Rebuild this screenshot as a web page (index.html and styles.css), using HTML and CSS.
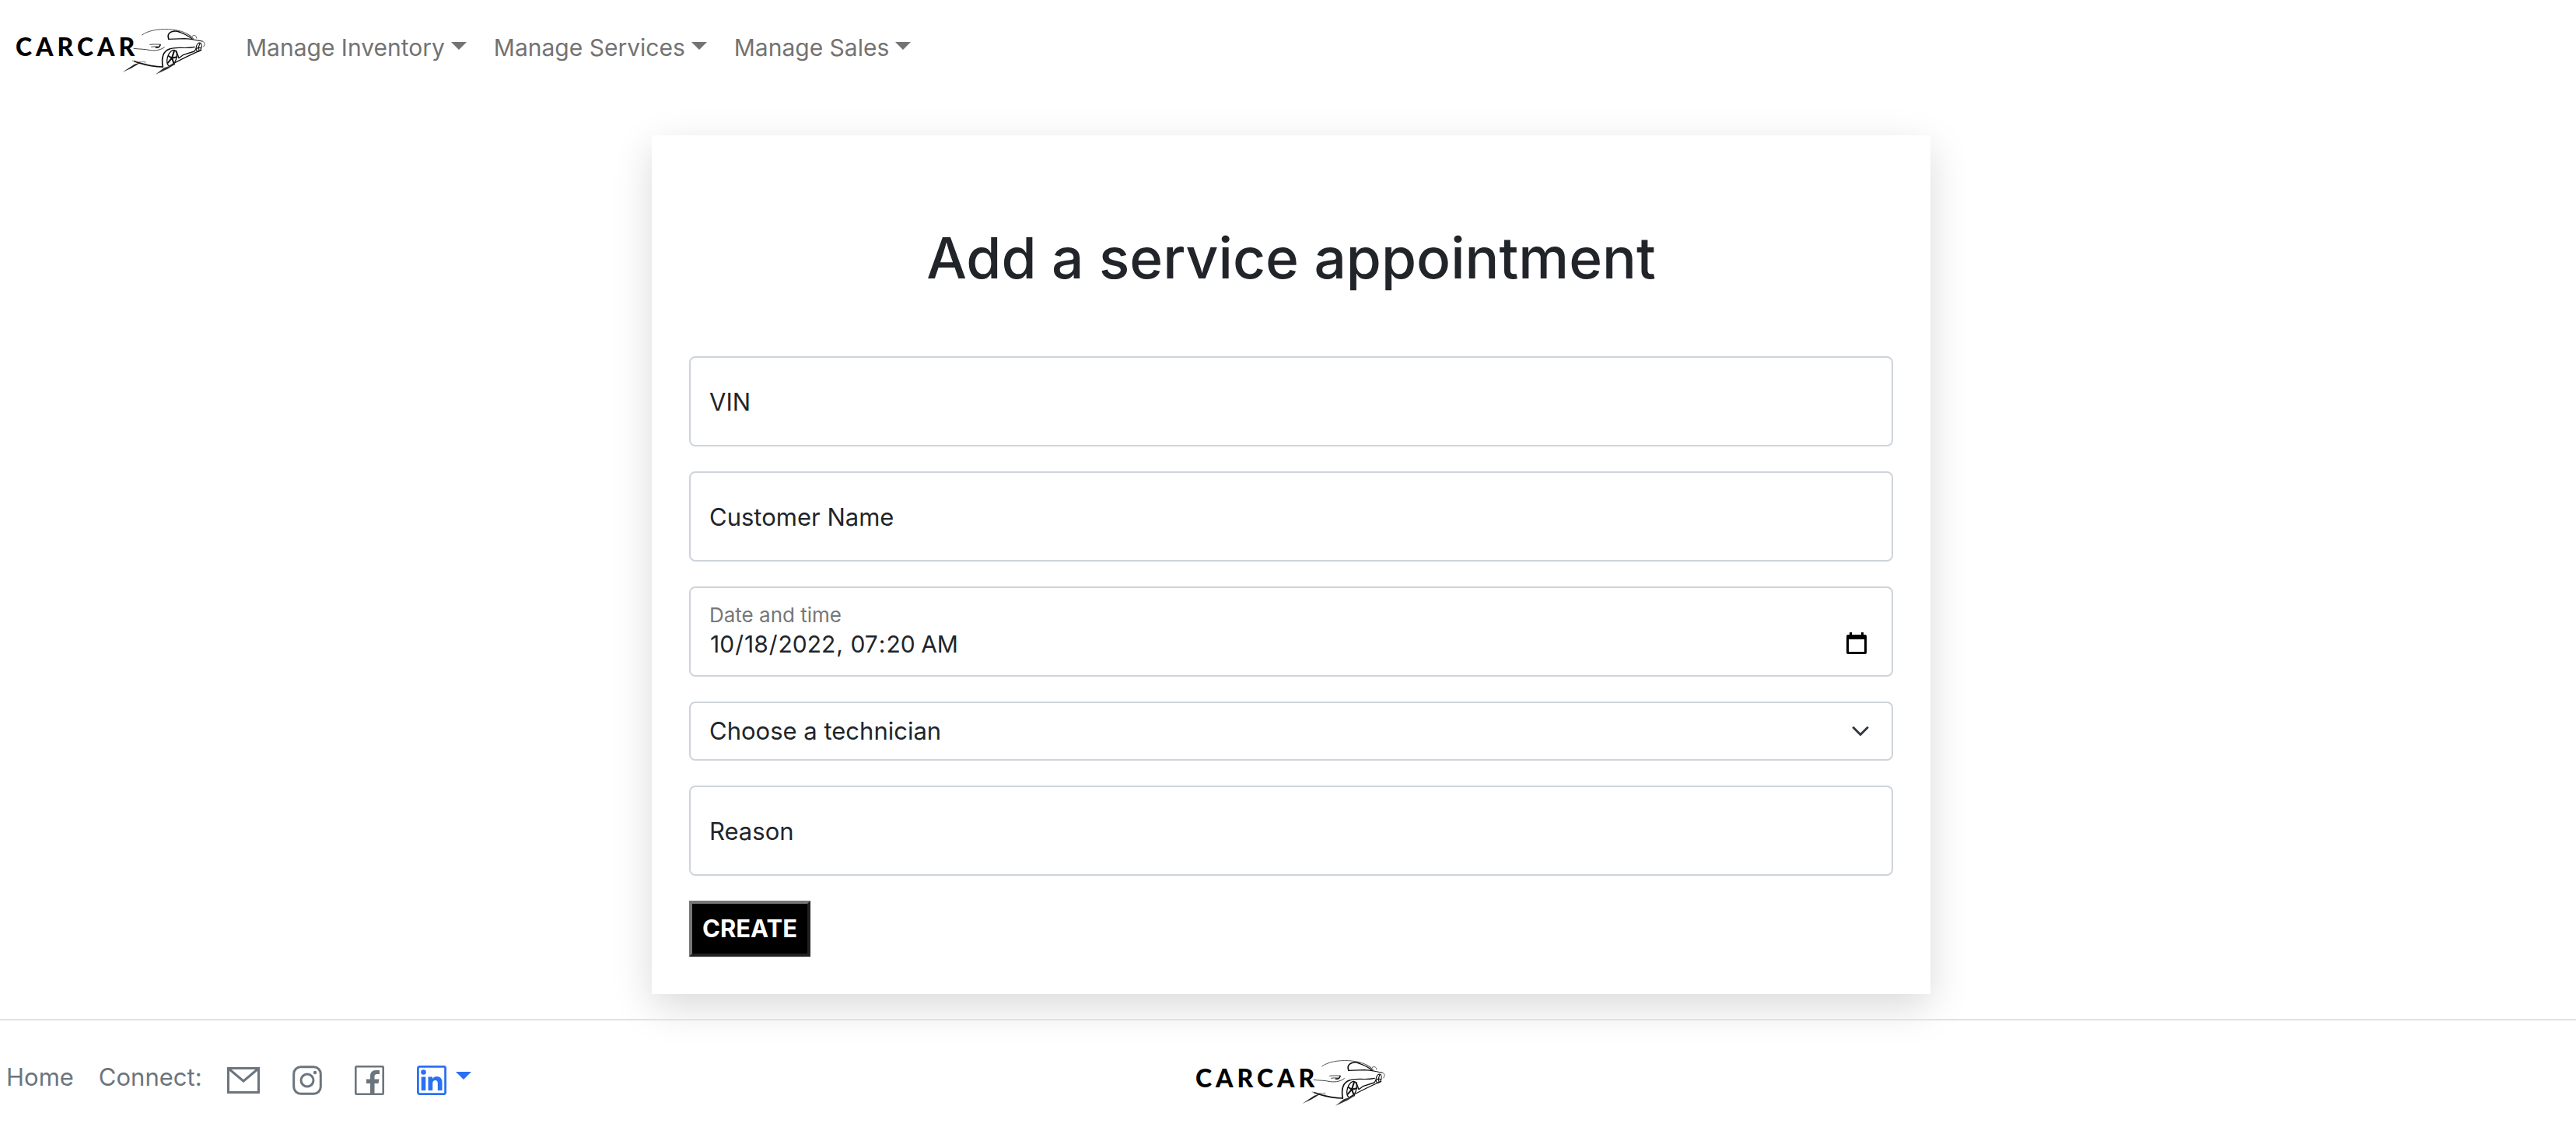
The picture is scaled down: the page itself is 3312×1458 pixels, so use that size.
FILE: index.html
```html
<!DOCTYPE html>
<html lang="en-US">
<head>
<meta charset="utf-8">
<meta name="viewport" content="width=device-width, initial-scale=1">
<title>CarCar</title>
<link rel="stylesheet" href="styles.css">
</head>
<body>
<svg width="0" height="0" class="sprite" aria-hidden="true">
  <symbol id="car" viewBox="138 22 126 82">
    <g transform="translate(150 20) scale(.3333)" fill="none" stroke="#111" stroke-width="3.500" stroke-linecap="round" stroke-linejoin="round">
      <path stroke="#555" stroke-width="3" d="M98 75C120 58 160 51 200 53C240 56 265 62 292 84"/>
      <path stroke-width="5" d="M201 91C193 72 206 60 226 60C232 60 238 62 243 64"/>
      <path stroke-width="4" d="M243 64C262 70 278 80 292 90"/>
      <path d="M201 91L262 89C290 89 306 96 330 99"/>
      <path stroke="#555" stroke-width="3" d="M330 99C340 102 343 110 335 120M292 79C300 73 309 78 308 87M270 70C280 76 290 82 297 90"/>
      <path stroke-width="5" d="M168 112C168 120 162 124 151 123"/>
      <path stroke="#444" stroke-width="3" d="M128 112C142 111 156 110 168 112M134 121C140 120 150 119 158 120"/>
      <path stroke="#444" stroke-width="3" d="M66 127C90 130 110 129 130 134C155 137 172 131 184 122"/>
      <path stroke-width="5" d="M178 198C172 164 178 138 204 129"/>
      <path d="M204 129C230 118 262 130 301 121"/>
      <path stroke-width="5" d="M68 176L84 182C110 190 150 198 178 198"/>
      <path stroke="#555" stroke-width="2" d="M60 174L86 179L110 178V184"/>
      <path fill="#222" stroke="none" d="M22 219L68 188L92 181L80 189L56 203Z"/>
      <ellipse cx="213" cy="164" rx="17" ry="32" transform="rotate(18 213 164)" stroke-width="4"/>
      <path stroke-width="6" d="M222 136L213 164L232 160M213 164L222 188M213 164L198 182M213 164L200 156"/>
      <path stroke-width="4" d="M230 136L240 164L256 152L300 138L306 128"/>
      <ellipse cx="317" cy="122" rx="10" ry="17" transform="rotate(14 317 122)"/>
      <path d="M321 107L316 122L325 126M316 122L318 136M316 122L308 128"/>
      <path stroke-width="4" d="M208 192C240 172 280 154 326 133"/>
      <path fill="#333" stroke="none" d="M150 227L182 202L206 194L226 180L222 190L196 206Z"/>
    </g>
  </symbol>
</svg>

<header class="navbar">
  <a class="brand" href="#"><span class="wordmark">CARCAR</span><svg class="car" aria-hidden="true"><use href="#car"/></svg></a>
  <nav class="nav">
    <a class="nav-link caret" href="#">Manage Inventory</a>
    <a class="nav-link caret" href="#">Manage Services</a>
    <a class="nav-link caret" href="#">Manage Sales</a>
  </nav>
</header>

<main class="main">
  <section class="card">
    <h1 class="title">Add a service appointment</h1>
    <form class="form">
      <div class="field">
        <input class="control" id="vin" type="text">
        <label class="label" for="vin">VIN</label>
      </div>
      <div class="field">
        <input class="control" id="customer" type="text">
        <label class="label" for="customer">Customer Name</label>
      </div>
      <div class="field">
        <input class="control control-date" id="date" type="datetime-local" value="2022-10-18T07:20">
        <label class="label label-small" for="date">Date and time</label>
      </div>
      <select class="select" aria-label="Technician">
        <option>Choose a technician</option>
      </select>
      <div class="field">
        <input class="control" id="reason" type="text">
        <label class="label" for="reason">Reason</label>
      </div>
      <button class="create" type="button">CREATE</button>
    </form>
  </section>
</main>

<footer class="footer">
  <div class="links">
    <a class="foot-link" href="#">Home</a>
    <span class="foot-link">Connect:</span>
    <a class="icon" href="#" aria-label="Email"><svg width="42" height="38" viewBox="0 0 42 38" fill="none" stroke="currentColor" stroke-width="3"><path d="M1.500 3.500H40.500V34.500H1.500ZM2 4L21 20L40 4"/></svg></a>
    <a class="icon" href="#" aria-label="Instagram"><svg width="38" height="38" viewBox="0 0 38 38" fill="none" stroke="currentColor" stroke-width="3"><rect x="1.700" y="1.700" width="34.600" height="34.600" rx="9"/><circle cx="19" cy="19" r="8"/><circle cx="29" cy="9" r="2.200" fill="currentColor" stroke="none"/></svg></a>
    <a class="icon" href="#" aria-label="Facebook"><svg width="38" height="38" viewBox="0 0 38 38" fill="none" stroke="currentColor" stroke-width="2.600"><rect x="1.300" y="1.300" width="35.400" height="35.400" rx="1"/><path fill="currentColor" stroke="none" d="M20 37V23H15V17.500H20V14Q20 6 27 6H32V11H28.500Q25.500 11 25.500 14V17.500H31.500L30.500 23H25.500V37Z"/></svg></a>
    <a class="icon icon-active caret" href="#" aria-label="LinkedIn"><svg width="38" height="38" viewBox="0 0 38 38" fill="none" stroke="currentColor" stroke-width="2.800"><rect x="1.400" y="1.400" width="35.200" height="35.200" rx="2"/><g fill="currentColor" stroke="none"><circle cx="8.500" cy="8.500" r="3.300"/><path d="M5.700 14.500H11.300V32H5.700ZM14.500 14.500H20V17Q22 14 25.500 14Q32.500 14 32.500 22V32H26.800V23Q26.800 19 23.800 19Q20.200 19 20.200 23V32H14.500Z"/></g></svg></a>
  </div>
  <a class="brand" href="#"><span class="wordmark">CARCAR</span><svg class="car" aria-hidden="true"><use href="#car"/></svg></a>
</footer>
</body>
</html>
```
FILE: styles.css
```css
* { box-sizing: border-box; }

body {
  margin: 0;
  background: #fff;
  color: #212529;
  font: 400 31px/48px Inter, "Liberation Sans", sans-serif;
}

a { color: inherit; text-decoration: none; }

.sprite { position: absolute; }

/* The wordmark and the car share one grid cell, so the car's tail runs under the last letter. */
.brand {
  display: grid;
  grid-template-columns: 250px;
  align-items: center;
  color: #000;
}

.wordmark {
  grid-area: 1 / 1;
  padding: 0 0 6px 6px;
  font: 900 32px/48px Lato, sans-serif;
  letter-spacing: 5px;
}

.car {
  grid-area: 1 / 1;
  justify-self: end;
  width: 126px;
  height: 82px;
}

.caret::after {
  content: "";
  display: inline-block;
  margin-left: 8px;
  vertical-align: 8px;
  border: 10px solid transparent;
  border-top-color: currentColor;
  border-bottom: 0;
}

.navbar {
  display: flex;
  align-items: center;
  gap: 36px;
  padding: 16px 14px;
  min-height: 126px;
}

.nav {
  display: flex;
  gap: 3px;
  padding-bottom: 4px;
  font-size: 30px;
}

.nav-link {
  padding: 16px;
  color: #737373;
}

.main { padding: 48px 0 32px 8px; }

.card {
  width: calc(50% - 8px);
  margin: 0 auto;
  padding: 48px;
  box-shadow: 0 16px 48px rgba(0, 0, 0, .15);
}

.title {
  margin: 60px 0 76px;
  font-size: 73px;
  font-weight: 500;
  line-height: 100px;
  text-align: center;
}

.form {
  display: grid;
  gap: 32px;
}

.field { position: relative; }

.control,
.select {
  display: block;
  width: 100%;
  border: 2px solid #ced4da;
  border-radius: 8px;
  background-color: #fff;
  color: #212529;
  font: inherit;
}

.control {
  height: 116px;
  padding: 32px 24px;
}

.control-date {
  padding: 48px 26px 16px 24px;
  font-size: 30px;
}

.control-date::-webkit-calendar-picker-indicator {
  width: 36px;
  height: 36px;
  padding: 0;
  background: url("data:image/svg+xml,%3Csvg xmlns='http://www.w3.org/2000/svg' viewBox='0 0 36 36'%3E%3Cpath fill-rule='evenodd' d='M8 3h3v3h12V3h3v3h2a2 2 0 0 1 2 2v21a2 2 0 0 1-2 2H6a2 2 0 0 1-2-2V8a2 2 0 0 1 2-2h2zM7 12v16h20V12z'/%3E%3C/svg%3E") center / 36px no-repeat;
}

.label {
  position: absolute;
  top: 35px;
  left: 26px;
  pointer-events: none;
}

.label-small {
  top: 19px;
  font-size: 26px;
  line-height: 36px;
  color: #777;
}

.select {
  height: 76px;
  padding: 12px 72px 12px 24px;
  appearance: none;
  background: url("data:image/svg+xml,%3Csvg xmlns='http://www.w3.org/2000/svg' viewBox='0 0 16 16'%3E%3Cpath fill='none' stroke='%23343a40' stroke-linecap='round' stroke-linejoin='round' stroke-width='2' d='M2 5l6 6 6-6'/%3E%3C/svg%3E") right 24px center / 32px 24px no-repeat;
}

.create {
  justify-self: start;
  padding: 8px 13px;
  border: 4px solid;
  border-color: #767676 #212121 #212121 #767676;
  background: #000;
  color: #fff;
  font: 700 31px/48px Inter, "Liberation Sans", sans-serif;
}

.footer {
  display: grid;
  grid-template-columns: 1fr auto 1fr;
  align-items: center;
  padding: 36px 0 28px;
  border-top: 2px solid #dee2e6;
  color: #6c757d;
}

.links {
  display: flex;
  align-items: center;
  padding-left: 8px;
}

.foot-link {
  margin-right: 32px;
  padding-bottom: 8px;
}

.icon {
  display: flex;
  align-items: center;
  margin-right: 42px;
}

.icon-active { color: #2a70f5; }

.icon-active::after { margin: 0 0 12px 12px; }
```
